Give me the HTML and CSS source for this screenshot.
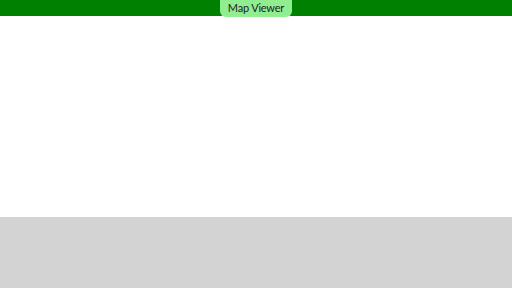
FILE: index.html
```html
<!DOCTYPE html>
<html>
<head>
<meta charset="utf-8">
<link rel="stylesheet" href="styles.css">
</head>
<body>
<div class="app">
  <header class="topbar">
    <div class="title">Map Viewer</div>
  </header>
  <main class="map"></main>
  <footer class="panel"></footer>
</div>
</body>
</html>
```
FILE: styles.css
```css
html, body {
  margin: 0;
  padding: 0;
  width: 512px;
  height: 288px;
  overflow: hidden;
  font-family: "Lato", "Noto Sans", sans-serif;
}
.app {
  display: flex;
  flex-direction: column;
  height: 288px;
}
.topbar {
  height: 16px;
  background: #008000;
  display: flex;
  justify-content: center;
  align-items: flex-start;
  position: relative;
  z-index: 2;
}
.title {
  width: 72px;
  height: 17px;
  flex: none;
  background: #90ee90;
  border-radius: 0 0 6px 6px;
  color: #222222;
  font-size: 11px;
  letter-spacing: -0.2px;
  line-height: 15px;
  text-align: center;
}
.map {
  flex: 1;
  background: #ffffff;
}
.panel {
  height: 71px;
  background: #d3d3d3;
}
```
